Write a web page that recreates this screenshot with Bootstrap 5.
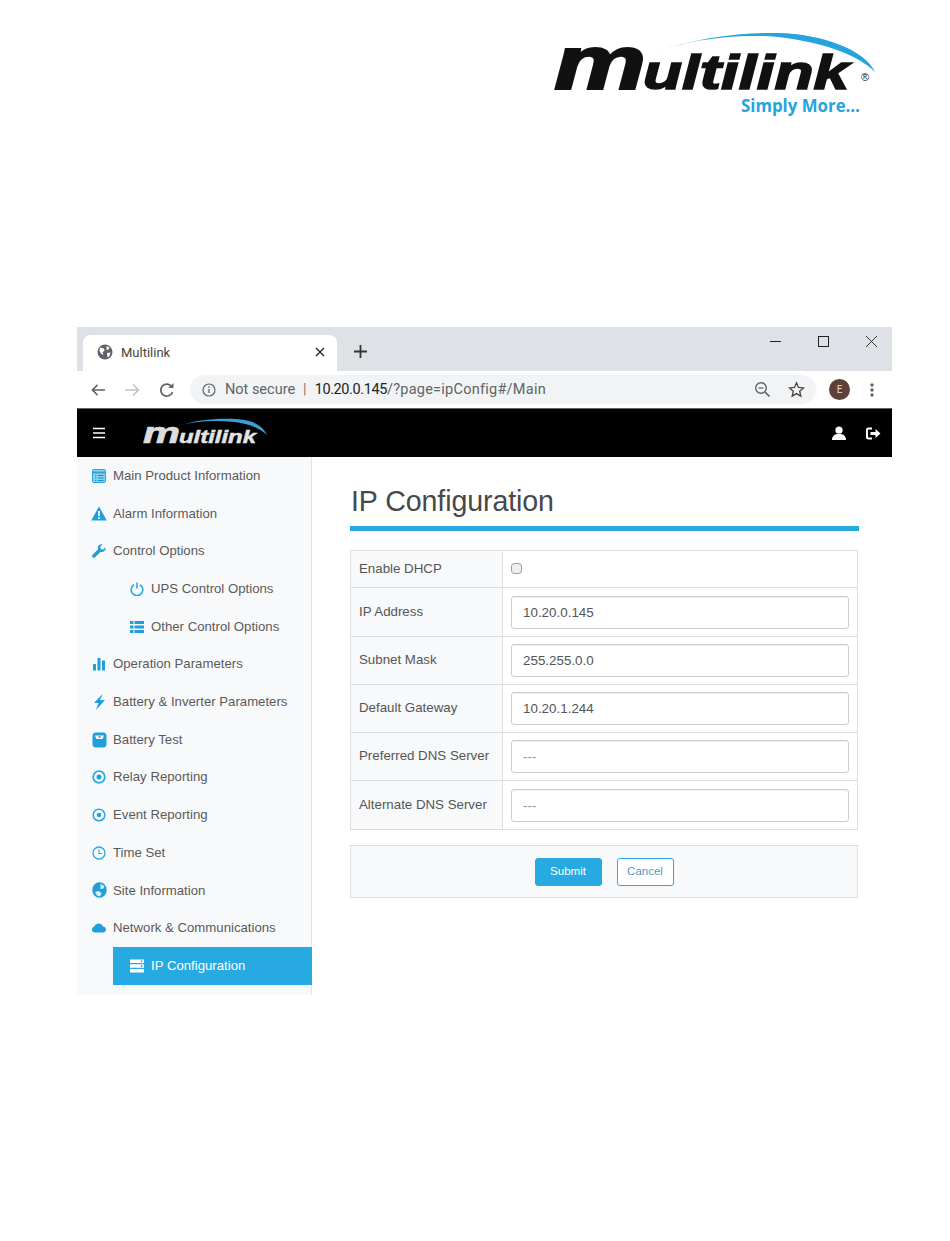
<!DOCTYPE html>
<html lang="en">
<head>
<meta charset="utf-8">
<title>Multilink</title>
<link rel="stylesheet" href="https://cdn.jsdelivr.net/npm/bootstrap@5.3.0/dist/css/bootstrap.min.css">
<style>
html,body{background:#fff;}
body{font-family:"Liberation Sans",Arial,sans-serif;font-size:13.2px;color:#555;height:1241px;overflow:hidden;}
.logo-wrap{padding:30px 75px 0 0;height:327px;}
.logo-wrap svg{display:block;overflow:visible;}
.shot{margin-left:77px;width:815px;height:668px;}
.tabbar{height:44px;background:#dee1e6;padding:8px 0 0 6px;}
.chrome-tab{width:254px;height:36px;background:#fff;border-radius:8px 8px 0 0;padding:0 12px 2px 14px;font:13px "Roboto",sans-serif;color:#444;}
.tab-name{margin-left:8px;}
.tab-close{margin-left:auto;}
.tab-plus{margin:10px 0 0 17px;}
.win-btns{margin-left:auto;gap:37px;padding:0 15px 23px 0;}
.toolbar{height:38px;background:#fff;border-bottom:1px solid #5f6368;padding:0 0 0 14px;}
.omni{width:627px;height:29px;background:#f1f3f4;border-radius:15px;padding:0 11px 0 12px;font:14.5px "Roboto",sans-serif;color:#5f6368;margin-left:15px;white-space:nowrap;}
.omni .host{color:#222;letter-spacing:-.4px;}
.omni .path{letter-spacing:.25px;}
.omni .sep{margin:0 8px;color:#777;}
.not-sec{margin-left:1px;}
.star-gap{margin-left:17px;}
.nav-fwd{margin-left:18px;}
.nav-reload{margin-left:19px;}
.avatar{width:21px;height:21px;background:#5d4037;color:#e8dcd8;border-radius:50%;font:10px "Roboto",sans-serif;margin-left:13px;}
.kebab{margin:0 18px 0 20px;}
.topnav{height:48px;background:#000;padding:0 11px 0 16px;}
.top-logo{margin-left:37px;overflow:visible;}
.user-gap{margin-left:20px;}
.user-ic{margin-left:auto;}
.panes{height:538px;}
.sidenav{width:235px;background:#f8f9fa;border-right:1px solid #e0e3e6;padding:0;}
.side-item{height:37.7px;padding-left:15px;color:#5a5a5a;white-space:nowrap;}
.side-item .ic{width:14px;height:14px;flex:none;margin-right:7px;}
.side-item .ic.wide{width:16px;height:15px;margin-left:-1px;margin-right:6px;}
.side-item .ic.tall{width:15px;height:16px;margin-right:6px;}
.side-item.sub{padding-left:53px;}
.side-item.current{margin-left:36px;margin-right:-1px;padding-left:17px;background:#27aae1;color:#fff;}
.content{padding:27px 34px 0 38px;}
.page-title{font-size:28.6px;font-weight:400;color:#484848;line-height:34px;margin:0;padding:0 0 8px 1px;letter-spacing:-.1px;}
.title-rule{height:5px;background:#27aae1;margin-right:-1px;margin-bottom:19px;}
.cfg-table{margin:0;color:#555;border-color:#dcdfe2;}
.cfg-table td{padding:0;vertical-align:middle;font-size:13.3px;color:#555;}
.cfg-table .lbl{width:152px;padding-left:8px;padding-bottom:1px;background:#f8f9fa;}
.cfg-table .val{padding:0 8px 0 8px;}
.cfg-table tr{height:48px;}
.cfg-table tr.tall{height:49px;}
.cfg-table tr.short{height:37px;}
.cfg-table tr.short td{padding-bottom:1px;}
.cfg-input{height:33px;font-size:13.4px;color:#555;padding:0 11px;border-radius:3px;border-color:#ccc;box-shadow:inset 0 1px 1px rgba(0,0,0,.06);}
.cfg-input.dim{color:#999;}
.cfg-check{width:11px;height:11px;margin:0;background:#eee;border-color:#999;border-radius:2px;display:block;}
.form-foot{margin-top:15px;height:53px;background:#f8f9fa;border:1px solid #dcdfe2;gap:15px;}
.btn-go,.btn-stop{font-size:11.5px;height:28px;padding:0;border-radius:3px;}
.btn-go{width:67px;background:#27aae1;border:1px solid #27aae1;color:#fff;}
.btn-stop{width:57px;background:#fff;border:1px solid #27aae1;color:#4a9cc4;}
</style>
</head>
<body>
<div class="logo-wrap d-flex justify-content-end">
<svg width="322" height="90" viewBox="0 0 322 90">
  <path d="M100 23C140 8 190 2 225 3C270 4 312 20 322 42C305 25 270 12 225 7C180 3 135 10 100 23Z" fill="#27a3dd"/>
  <text x="1" y="59" font-family="Liberation Sans" font-weight="700" font-style="italic" font-size="76" fill="#111" stroke="#111" stroke-width="2" textLength="92" lengthAdjust="spacingAndGlyphs">m</text>
  <text x="90" y="59" font-family="Liberation Sans" font-weight="700" font-style="italic" font-size="49" fill="#111" stroke="#111" stroke-width="1.6" textLength="206" lengthAdjust="spacingAndGlyphs">ultilink</text>
  <text x="312" y="51" font-family="Liberation Sans" font-size="11" fill="#222" text-anchor="middle">®</text>
  <text x="188" y="82" font-family="Open Sans" font-weight="700" font-size="18" fill="#27a3dd" textLength="119" lengthAdjust="spacingAndGlyphs">Simply More…</text>
</svg>
</div>

<div class="shot">
  <div class="tabbar d-flex">
    <div class="chrome-tab d-flex align-items-center">
      <svg width="16" height="16" viewBox="0 0 16 16"><circle cx="8" cy="8" r="7.5" fill="#5f6368"/><path d="M3 3.500l4 1 .5 2.500-2 1 1 3-2-1-2-3zM9.500 2l3 1.500-1 2-2 .5zM10 9l3.500-.5-1 3.500-2 1.500z" fill="#fff"/></svg>
      <span class="tab-name">Multilink</span>
      <svg width="10" height="10" viewBox="0 0 10 10" class="tab-close"><path d="M1 1l8 8M9 1L1 9" stroke="#333" stroke-width="1.5"/></svg>
    </div>
    <svg width="13" height="13" viewBox="0 0 13 13" class="tab-plus"><path d="M6.500 0v13M0 6.500h13" stroke="#333" stroke-width="1.8"/></svg>
    <div class="win-btns d-flex align-items-center">
      <svg width="11" height="11" viewBox="0 0 11 11"><path d="M0 5.500h11" stroke="#222"/></svg>
      <svg width="11" height="11" viewBox="0 0 11 11"><rect x=".5" y=".5" width="10" height="10" fill="none" stroke="#222"/></svg>
      <svg width="11" height="11" viewBox="0 0 11 11"><path d="M0 0l11 11M11 0L0 11" stroke="#222" stroke-width=".9"/></svg>
    </div>
  </div>
  <div class="toolbar d-flex align-items-center">
    <svg width="15" height="14" viewBox="0 0 16 14"><path d="M15 7H2M7 1.500L1.500 7 7 12.500" fill="none" stroke="#5f6368" stroke-width="1.700"/></svg>
    <svg width="16" height="14" viewBox="0 0 16 14" class="nav-fwd"><path d="M1 7h13M9 1.500L14.500 7 9 12.500" fill="none" stroke="#c0c3c7" stroke-width="1.600"/></svg>
    <svg width="16" height="16" viewBox="0 0 16 16" class="nav-reload"><path d="M13.500 10a6 6 0 1 1-.6-5" fill="none" stroke="#5f6368" stroke-width="1.700"/><path d="M14.500 1v5h-5z" fill="#5f6368"/></svg>
    <div class="omni d-flex align-items-center">
      <svg width="14" height="14" viewBox="0 0 14 14" class="me-2 flex-none"><circle cx="7" cy="7" r="6" fill="none" stroke="#5f6368" stroke-width="1.200"/><path d="M7 6v4M7 3.600v1.300" stroke="#5f6368" stroke-width="1.300"/></svg>
      <span class="not-sec">Not secure</span><span class="sep">|</span><span class="host">10.20.0.145</span><span class="path">/?page=ipConfig#/Main</span>
      <svg width="17" height="17" viewBox="0 0 17 17" class="ms-auto"><circle cx="7" cy="7" r="5.300" fill="none" stroke="#5f6368" stroke-width="1.400"/><path d="M11 11l4.500 4.500" stroke="#5f6368" stroke-width="1.700"/><path d="M4.500 7h5" stroke="#5f6368" stroke-width="1.200"/></svg>
      <svg width="17" height="17" viewBox="0 0 17 17" class="star-gap"><path d="M8.500 1.800l2 4.600 5 .5-3.800 3.300 1.100 4.900-4.300-2.500-4.300 2.500 1.100-4.900L1.500 6.900l5-.5z" fill="none" stroke="#444" stroke-width="1.300"/></svg>
    </div>
    <div class="avatar d-flex align-items-center justify-content-center flex-none">E</div>
    <svg width="4" height="14" viewBox="0 0 4 14" class="kebab"><circle cx="2" cy="2" r="1.700" fill="#5f6368"/><circle cx="2" cy="7" r="1.700" fill="#5f6368"/><circle cx="2" cy="12" r="1.700" fill="#5f6368"/></svg>
  </div>
  <div class="topnav d-flex align-items-center">
    <svg width="12" height="12" viewBox="0 0 12 12"><path d="M0 1.500h12M0 6h12M0 10.500h12" stroke="#fff" stroke-width="1.700"/></svg>
    <svg width="126" height="30" viewBox="0 0 126 30" class="top-logo">
      <path d="M36 8C55 1 85-1 103 2C114 4 122 10 125 17C116 9 104 5 92 4C72 2 52 3 36 8Z" fill="#3d9ed3"/>
      <text x="1" y="25" font-family="Liberation Sans" font-weight="700" font-style="italic" font-size="30" fill="#dcdcdc" stroke="#dcdcdc" stroke-width=".7" textLength="37" lengthAdjust="spacingAndGlyphs">m</text>
      <text x="37" y="25" font-family="Liberation Sans" font-weight="700" font-style="italic" font-size="18" fill="#e4e4e4" stroke="#e4e4e4" stroke-width=".5" textLength="77" lengthAdjust="spacingAndGlyphs">ultilink</text>
    </svg>
    <svg width="14" height="14" viewBox="0 0 14 14" class="user-ic"><circle cx="7" cy="4.200" r="3.600" fill="#fff"/><path d="M0 14c0-4 2.500-5.500 5-6h4c2.500.5 5 2 5 6z" fill="#fff"/></svg>
    <svg width="15" height="13" viewBox="0 0 15 13" class="user-gap"><path d="M6 1.500H2.500Q1 1.500 1 3v7q0 1.500 1.500 1.500H6" fill="none" stroke="#fff" stroke-width="2"/><path d="M4.500 5h5V2l5 4.500-5 4.500V8h-5z" fill="#fff"/></svg>
  </div>
  <div class="panes d-flex">
    <nav class="sidenav flex-none">
      <div class="side-item d-flex align-items-center"><svg class="ic" viewBox="0 0 14 14"><rect x=".5" y=".5" width="13" height="13" rx="1.500" fill="#8fd0ee" stroke="#27aae1"/><path d="M.5 3.500h13" stroke="#27aae1" stroke-width="2"/><path d="M3 6.500h1.500M6 6.500h5.500M3 9h1.500M6 9h5.500M3 11.500h1.500M6 11.500h5.500" stroke="#1a8fc7" stroke-width="1"/></svg>Main Product Information</div>
      <div class="side-item d-flex align-items-center"><svg class="ic wide" viewBox="0 0 16 15"><path d="M8 .5L15.800 14.500H.2z" fill="#1f9fdb"/><path d="M8 5v5M8 11.200v1.800" stroke="#fff" stroke-width="1.800"/></svg>Alarm Information</div>
      <div class="side-item d-flex align-items-center"><svg class="ic" viewBox="0 0 14 14"><path d="M13.500 3.300l-2.400 2.400-2.300-.6-.6-2.300L10.600.4C8.700-.2 6.600.7 6 2.600c-.3.900-.2 1.800.1 2.600L.6 10.700c-.7.700-.7 1.800 0 2.500s1.800.7 2.500 0l5.500-5.500c1 .4 2.200.4 3.200-.2 1.500-.9 2.200-2.800 1.700-4.200z" fill="#1f9fdb"/></svg>Control Options</div>
      <div class="side-item sub d-flex align-items-center"><svg class="ic" viewBox="0 0 14 14"><path d="M4 2.800a5.800 5.800 0 1 0 6 0" fill="none" stroke="#27aae1" stroke-width="1.600"/><path d="M7 .5v6" stroke="#27aae1" stroke-width="1.600"/></svg>UPS Control Options</div>
      <div class="side-item sub d-flex align-items-center"><svg class="ic" viewBox="0 0 14 14"><path d="M0 1h3.500v3H0zM4.500 1H14v3H4.500zM0 5.500h3.500v3H0zM4.500 5.500H14v3H4.500zM0 10h3.500v3H0zM4.500 10H14v3H4.500z" fill="#1f9fdb"/></svg>Other Control Options</div>
      <div class="side-item d-flex align-items-center"><svg class="ic" viewBox="0 0 14 14"><rect x="1" y="7" width="3" height="6.500" rx=".5" fill="#1f9fdb"/><rect x="5.500" y="1" width="3" height="12.500" rx=".5" fill="#1f9fdb"/><rect x="10" y="3.500" width="3" height="10" rx=".5" fill="#1f9fdb"/></svg>Operation Parameters</div>
      <div class="side-item d-flex align-items-center"><svg class="ic tall" viewBox="0 0 15 16"><path d="M10.500 0L2 9h4.500L4 16l9-10H8z" fill="#1f9fdb"/></svg>Battery &amp; Inverter Parameters</div>
      <div class="side-item d-flex align-items-center"><svg class="ic tall" viewBox="0 0 15 16"><rect x=".5" y=".5" width="14" height="15" rx="3.500" fill="#1f9fdb"/><path d="M3 3.500h9l-1.500 3.500h-6z" fill="#fff"/><circle cx="7.500" cy="5" r="1.100" fill="#1f9fdb"/></svg>Battery Test</div>
      <div class="side-item d-flex align-items-center"><svg class="ic" viewBox="0 0 14 14"><circle cx="7" cy="7" r="5.800" fill="none" stroke="#27aae1" stroke-width="1.800"/><circle cx="7" cy="7" r="2.500" fill="#1f9fdb"/></svg>Relay Reporting</div>
      <div class="side-item d-flex align-items-center"><svg class="ic" viewBox="0 0 14 14"><circle cx="7" cy="7" r="5.800" fill="none" stroke="#27aae1" stroke-width="1.500"/><circle cx="7" cy="7" r="2.200" fill="#1f9fdb"/></svg>Event Reporting</div>
      <div class="side-item d-flex align-items-center"><svg class="ic" viewBox="0 0 14 14"><circle cx="7" cy="7" r="6" fill="none" stroke="#27aae1" stroke-width="1.300"/><path d="M7 3.500V7.500H10" fill="none" stroke="#27aae1" stroke-width="1.100"/></svg>Time Set</div>
      <div class="side-item d-flex align-items-center"><svg class="ic tall" viewBox="0 0 15 16"><ellipse cx="7.500" cy="8" rx="7.200" ry="7.800" fill="#1f9fdb"/><path d="M3 10l3.500-1 3 2-1.500 3.500-3-1zM8.500 2l4 2-1 2.500-3 .5z" fill="#dff2fb"/></svg>Site Information</div>
      <div class="side-item d-flex align-items-center"><svg class="ic" viewBox="0 0 14 14"><path d="M3.200 11.500C1.400 11.500 0 10.200 0 8.500c0-1.500 1-2.700 2.400-3C2.900 3.500 4.800 2.500 6.700 2.500c2 0 3.700 1.200 4.200 3C12.800 5.600 14 7 14 8.600c0 1.600-1.300 2.900-3 2.900z" fill="#1f9fdb"/></svg>Network &amp; Communications</div>
      <div class="side-item current d-flex align-items-center"><svg class="ic" viewBox="0 0 14 14"><path d="M0 .5h14v3.500H0zM0 5.300h14v3.500H0zM0 10h14v3.500H0z" fill="#fff"/><circle cx="11.500" cy="2.200" r=".9" fill="#27aae1"/><circle cx="11.500" cy="7" r=".9" fill="#27aae1"/></svg>IP Configuration</div>
    </nav>
    <main class="content flex-grow-1">
      <h1 class="page-title">IP Configuration</h1>
      <div class="title-rule"></div>
      <table class="table table-bordered cfg-table">
        <tbody>
          <tr class="short"><td class="lbl">Enable DHCP</td><td class="val"><input class="form-check-input cfg-check" type="checkbox" aria-label="Enable DHCP"></td></tr>
          <tr class="tall"><td class="lbl">IP Address</td><td class="val"><input class="form-control cfg-input" value="10.20.0.145" aria-label="IP Address"></td></tr>
          <tr><td class="lbl">Subnet Mask</td><td class="val"><input class="form-control cfg-input" value="255.255.0.0" aria-label="Subnet Mask"></td></tr>
          <tr><td class="lbl">Default Gateway</td><td class="val"><input class="form-control cfg-input" value="10.20.1.244" aria-label="Default Gateway"></td></tr>
          <tr><td class="lbl">Preferred DNS Server</td><td class="val"><input class="form-control cfg-input dim" value="---" aria-label="Preferred DNS Server"></td></tr>
          <tr class="tall"><td class="lbl">Alternate DNS Server</td><td class="val"><input class="form-control cfg-input dim" value="---" aria-label="Alternate DNS Server"></td></tr>
        </tbody>
      </table>
      <div class="form-foot d-flex align-items-center justify-content-center">
        <button class="btn btn-go" type="button">Submit</button>
        <button class="btn btn-stop" type="button">Cancel</button>
      </div>
    </main>
  </div>
</div>
</body>
</html>
